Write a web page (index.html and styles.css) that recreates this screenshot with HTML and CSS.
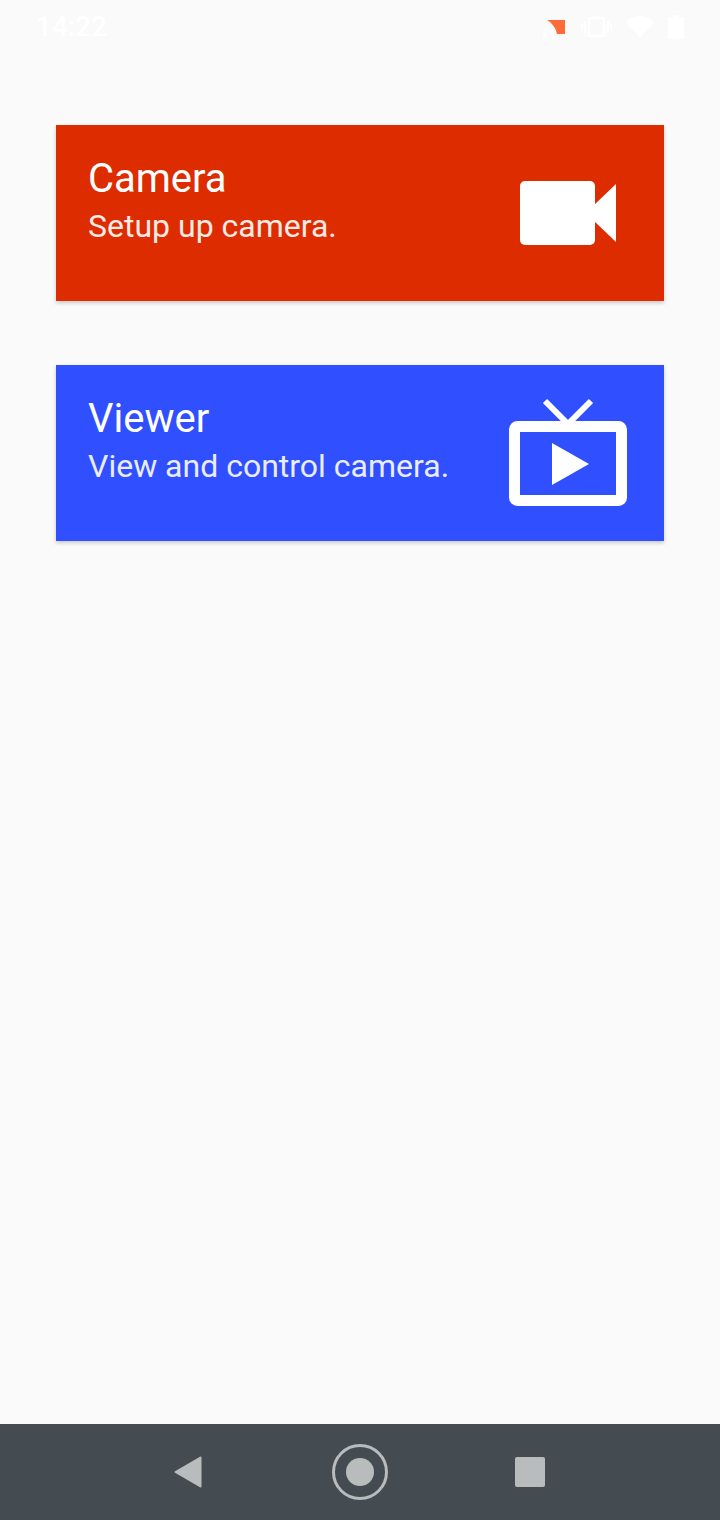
FILE: index.html
```html
<!DOCTYPE html>
<html lang="en">
<head>
    <meta charset="UTF-8">
    <meta name="viewport" content="width=device-width, initial-scale=1.0">
    <title>Camera</title>
    <link rel="stylesheet" href="styles.css">
</head>
<body>
<div class="screen">
    <div class="status-bar">
        <span class="clock">14:22</span>
        <div class="status-icons">
            <svg width="26" height="24" viewBox="0 0 26 24">
                <path d="M6 5 H24 V19 H16 C15 13 11 8 6 5 Z" fill="#ff6a39"/>
                <path d="M2 14 C7 14 13 18 13 24 M2 18 C5 18 8 20 8 24" fill="none" stroke="#fff" stroke-width="2"/>
                <circle cx="3.500" cy="21.500" r="2" fill="#fff"/>
            </svg>
            <svg width="34" height="24" viewBox="0 0 34 24">
                <rect x="10" y="3" width="15" height="18" rx="2" fill="none" stroke="#fff" stroke-width="2.500"/>
                <path d="M6 6 V18 M29 6 V18 M3 9 V15 M32 9 V15" stroke="#fff" stroke-width="2"/>
            </svg>
            <svg width="30" height="24" viewBox="0 0 30 24">
                <path d="M1 7 C8 -1 22 -1 29 7 L15 23 Z" fill="#fff"/>
            </svg>
            <svg width="18" height="24" viewBox="0 0 18 24">
                <path d="M1 3.500 Q1 2.500 2 2.500 H6 V-1 H12 V2.500 H16 Q17 2.500 17 3.500 V23 Q17 24 16 24 H2 Q1 24 1 23 Z" fill="#fff"/>
            </svg>
        </div>
    </div>

    <div class="content">
        <div class="card card-camera">
            <div class="card-text">
                <div class="card-title">Camera</div>
                <div class="card-sub">Setup up camera.</div>
            </div>
            <svg width="96" height="64" viewBox="0 0 96 64">
                <rect x="0" y="0" width="75" height="64" rx="5" fill="#fff"/>
                <path d="M74 24 L96 3 V61 L74 40 Z" fill="#fff"/>
            </svg>
        </div>
        <div class="card card-viewer">
            <div class="card-text">
                <div class="card-title">Viewer</div>
                <div class="card-sub">View and control camera.</div>
            </div>
            <svg class="icon-tv" width="118" height="108" viewBox="0 0 118 108">
                <path d="M36 3 L59 26 L82 3" fill="none" stroke="#fff" stroke-width="6"/>
                <rect x="5.500" y="28.500" width="107" height="74" rx="3" fill="none" stroke="#fff" stroke-width="11"/>
                <path d="M43 45 V87 L80 66 Z" fill="#fff"/>
            </svg>
        </div>
    </div>

    <div class="nav-bar">
        <svg width="28" height="32" viewBox="0 0 28 32">
            <path d="M26.500 1.500 V30.500 L1.500 16 Z" fill="#b9bcbd" stroke="#b9bcbd" stroke-width="2" stroke-linejoin="round"/>
        </svg>
        <svg width="56" height="56" viewBox="0 0 56 56">
            <circle cx="28" cy="28" r="26.500" fill="none" stroke="#b9bcbd" stroke-width="3"/>
            <circle cx="28" cy="28" r="14" fill="#b9bcbd"/>
        </svg>
        <div class="nav-recent"></div>
    </div>
</div>
</body>
</html>
```

FILE: styles.css
```css
body {
    margin: 0;
    padding: 0;
    background: #fafafa;
    font-family: Roboto, sans-serif;
}

.screen {
    width: 720px;
    height: 1520px;
    display: flex;
    flex-direction: column;
    overflow: hidden;
}

.status-bar {
    height: 53px;
    display: flex;
    justify-content: space-between;
    align-items: center;
    padding: 0 35px 0 36px;
    box-sizing: border-box;
}

.clock {
    color: #fff;
    font-size: 28px;
    font-weight: 500;
}

.status-icons {
    display: flex;
    align-items: center;
    gap: 12px;
}

.content {
    flex: 1;
    padding: 72px 56px 0;
    display: flex;
    flex-direction: column;
    gap: 64px;
}

.card {
    height: 176px;
    display: flex;
    align-items: center;
    justify-content: space-between;
    color: #fff;
    padding: 0 48px 0 32px;
    box-sizing: border-box;
    box-shadow: 0 2px 4px rgba(0, 0, 0, 0.2);
}

.card-camera {
    background: #dd2c00;
}

.card-viewer {
    background: #304ffe;
    padding-right: 37px;
}

.card-text {
    margin-bottom: 25px;
}

.card-title {
    font-size: 40px;
    line-height: 46px;
}

.card-sub {
    font-size: 32px;
    line-height: 38px;
    margin-top: 5px;
    opacity: 0.9;
}

.icon-tv {
    margin-bottom: 2px;
}

.nav-bar {
    height: 96px;
    background: #454c51;
    display: flex;
    align-items: center;
    gap: 130px;
    padding-left: 174px;
}

.nav-recent {
    width: 30px;
    height: 30px;
    border-radius: 2px;
    background: #b9bcbd;
    margin-left: -3px;
}
```
